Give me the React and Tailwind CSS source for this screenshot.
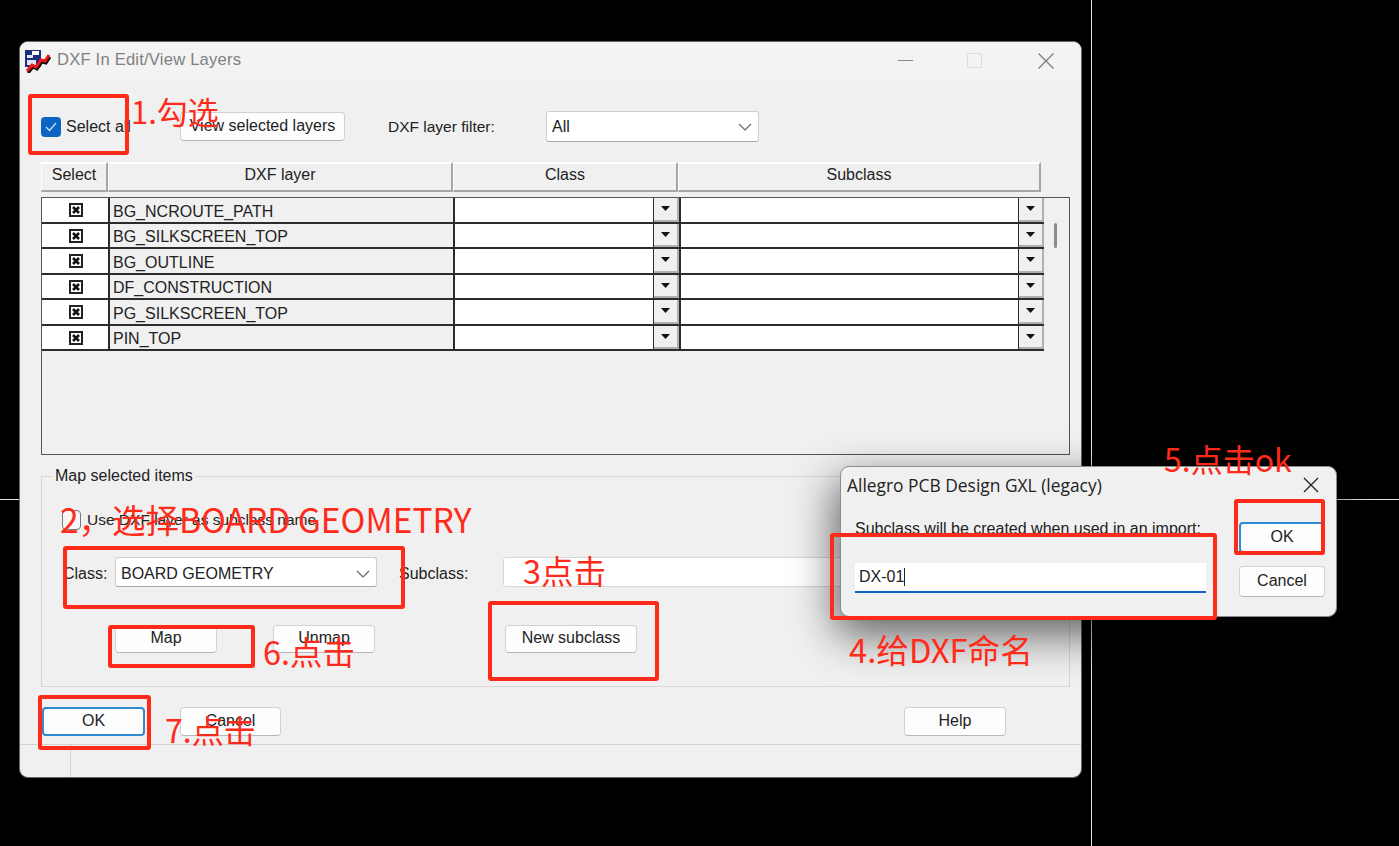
import React from "react";

const uiFont = "font-['Liberation_Sans',sans-serif]";
const layers = [
  "BG_NCROUTE_PATH",
  "BG_SILKSCREEN_TOP",
  "BG_OUTLINE",
  "DF_CONSTRUCTION",
  "PG_SILKSCREEN_TOP",
  "PIN_TOP",
];

const Chevron = () => (
  <svg width="14" height="8" viewBox="0 0 14 8" fill="none" stroke="#666" strokeWidth="1.2">
    <path d="M1 1l6 6 6-6" />
  </svg>
);

const Button = ({ className = "", children }) => (
  <button className={`flex items-center justify-center pb-[2px] rounded-[4px] bg-[#fdfdfd] border border-[#d2d2d2] border-b-[#b8b8b8] text-[#222] text-[16px] ${className}`}>
    {children}
  </button>
);

const DefaultButton = ({ className = "", children }) => (
  <button className={`flex items-center justify-center pb-[2px] rounded-[4px] bg-[#fdfdfd] border-2 border-[#2f8bd0] text-[#222] text-[16px] ${className}`}>
    {children}
  </button>
);

const Select = ({ className = "", children }) => (
  <div className={`flex items-center justify-between pl-[5px] pr-[6px] rounded-[3px] bg-white border border-[#cfcfcf] border-b-[#a8a8a8] text-[#222] text-[16px] ${className}`}>
    <span>{children}</span>
    <Chevron />
  </div>
);

const AppIcon = () => (
  <svg width="27" height="24" viewBox="0 0 27 24" className="shrink-0">
    <rect x="1" y="1" width="16" height="17" fill="#1c2f7a" />
    <rect x="3" y="6" width="6" height="3" fill="#dfe6f5" />
    <rect x="8" y="2" width="7" height="4" fill="#fff" />
    <rect x="3" y="11" width="9" height="5" fill="#dfe6f5" />
    <path d="M3 23l5-6 4 2 5-7 4 1 4-6" stroke="#111" strokeWidth="3" fill="none" transform="translate(1 1)" />
    <path d="M3 22l5-6 4 2 5-7 4 1 4-6" stroke="#f0141c" strokeWidth="3" fill="none" />
  </svg>
);

const HeaderCell = ({ className = "", children }) => (
  <div className={`h-full flex items-center justify-center pb-[5px] bg-[#f0f0f0] border-t-2 border-t-white border-l border-l-white border-r-2 border-r-[#a5a5a5] border-b-2 border-b-[#a5a5a5] text-[#222] text-[16px] ${className}`}>
    {children}
  </div>
);

const DropButton = ({ className = "" }) => (
  <div className={`w-[25px] shrink-0 flex items-center justify-center bg-[#f0f0f0] border-r-2 border-r-[#b0b0b0] border-b-2 border-b-[#b0b0b0] ${className}`}>
    <svg width="9" height="5" viewBox="0 0 9 5">
      <path d="M0 0h9L4.500 5z" fill="#111" />
    </svg>
  </div>
);

const CheckMark = () => (
  <svg width="14" height="14" viewBox="0 0 14 14">
    <rect x="1" y="1" width="12" height="12" fill="#fff" stroke="#222" strokeWidth="2" />
    <path d="M4 4l6 6M10 4l-6 6" stroke="#111" strokeWidth="2.600" />
  </svg>
);

const LayerRow = ({ name }) => (
  <div className="h-[25.5px] flex border-b-2 border-b-[#2c2c2c] text-[#222] text-[16px]">
    <div className="w-[68px] shrink-0 flex items-center justify-center pl-[2px] pt-[1px] bg-white border-r-2 border-r-[#2c2c2c]">
      <CheckMark />
    </div>
    <div className="w-[345px] shrink-0 flex items-center pl-[3px] pt-[4px] bg-[#f0f0f0] border-r-2 border-r-[#2c2c2c]">
      {name}
    </div>
    <div className="w-[199px] shrink-0 bg-white border-r border-r-[#2c2c2c]" />
    <DropButton />
    <div className="w-[340px] shrink-0 bg-white border-l-2 border-l-[#2c2c2c] border-r border-r-[#2c2c2c]" />
    <DropButton />
  </div>
);

const RedBox = ({ className = "" }) => (
  <div className={`absolute border-[4px] border-[#ff2a1a] rounded-[3px] ${className}`} />
);

const RedText = ({ className = "", children }) => (
  <div className={`absolute whitespace-nowrap leading-none text-[#ff2a1a] font-['Noto_Sans_CJK_SC',sans-serif] ${className}`}>
    {children}
  </div>
);

export default function App() {
  return (
    <div className={`relative w-[1399px] h-[846px] overflow-hidden bg-black ${uiFont}`}>
      {/* crosshair behind the windows */}
      <div className="absolute left-[1091px] top-0 w-px h-[846px] bg-[#e6e6e6]" />
      <div className="absolute left-0 top-[499px] w-[1399px] h-px bg-[#e6e6e6]" />

      {/* main window */}
      <div className="absolute left-[19px] top-[41px] w-[1063px] h-[737px] flex flex-col overflow-hidden rounded-[9px] border border-[#666] bg-[#f0f0f0]">
        <div className="h-[37px] shrink-0 flex items-center bg-[#f3f3f3] pl-[4px]">
          <AppIcon />
          <span className="ml-[6px] text-[16.6px] text-[#808080] tracking-[0.2px]">DXF In Edit/View Layers</span>
          <div className="ml-auto flex items-center mr-[27px]">
            <div className="w-[15px] h-px bg-[#8a8a8a]" />
            <div className="ml-[54px] w-[15px] h-[15px] rounded-[2px] border border-[#dcdcdc]" />
            <svg className="ml-[56px]" width="16" height="16" viewBox="0 0 16 16" stroke="#777" strokeWidth="1.100">
              <path d="M0.500 0.500l15 15M15.500 0.500l-15 15" />
            </svg>
          </div>
        </div>

        <div className="pl-[21px] flex flex-col">
          {/* top controls */}
          <div className="mt-[32px] h-[31px] flex items-center">
            <div className="w-[139px] flex items-center text-[16px] text-[#222]">
              <div className="w-[20px] h-[20px] rounded-[4px] bg-[#0a66c2] flex items-center justify-center">
                <svg width="12" height="10" viewBox="0 0 12 10" fill="none" stroke="#cfe2f7" strokeWidth="1.200">
                  <path d="M1 5l3.500 3.500L11 1" />
                </svg>
              </div>
              <span className="ml-[5px]">Select all</span>
            </div>
            <Button className="w-[165px] h-[29px]">View selected layers</Button>
            <span className="ml-[43px] w-[158px] text-[15.500px] text-[#222]">DXF layer filter:</span>
            <Select className="w-[213px] h-[31px]">All</Select>
          </div>

          {/* table header */}
          <div className="mt-[20px] h-[30px] flex">
            <HeaderCell className="w-[67px]">Select</HeaderCell>
            <HeaderCell className="w-[345px]">DXF layer</HeaderCell>
            <HeaderCell className="w-[225px]">Class</HeaderCell>
            <HeaderCell className="w-[363px]">Subclass</HeaderCell>
          </div>

          {/* table */}
          <div className="mt-[5px] w-[1029px] h-[258px] flex border-[1.5px] border-[#555] bg-[#f0f0f0]">
            <div className="w-[1002px] shrink-0 flex flex-col">
              {layers.map((name) => (
                <LayerRow key={name} name={name} />
              ))}
            </div>
            <div className="flex-1 pt-[25px] pl-[10px]">
              <div className="w-[3px] h-[25px] rounded-full bg-[#8c8c8c]" />
            </div>
          </div>

          {/* map selected items */}
          <div className="relative mt-[21px] w-[1029px] h-[211px] border border-[#d6d6d6] flex flex-col">
            <span className="absolute left-[10px] -top-[10px] px-[3px] bg-[#f0f0f0] text-[16px] leading-[18px] text-[#222]">Map selected items</span>
            <div className="mt-[33px] ml-[20px] h-[20px] flex items-center text-[15.500px] text-[#222]">
              <div className="w-[19px] h-[20px] rounded-[4px] border border-[#777] bg-[#f6f6f6]" />
              <span className="ml-[6px]">Use DXF layer as subclass name</span>
            </div>
            <div className="mt-[27px] h-[30px] flex items-center text-[16px] text-[#222]">
              <span className="ml-[21px] w-[52px] pt-[4px]">Class:</span>
              <Select className="w-[262px] h-[30px] pt-[4px]">BOARD GEOMETRY</Select>
              <span className="ml-[22px] w-[104px] pt-[4px]">Subclass:</span>
              <div className="w-[400px] h-[30px] rounded-[3px] bg-white border border-[#d6d6d6]" />
            </div>
            <div className="mt-[38px] flex">
              <Button className="ml-[73px] w-[102px] h-[28px]">Map</Button>
              <Button className="ml-[56px] w-[102px] h-[28px]">Unmap</Button>
              <Button className="ml-[130px] w-[132px] h-[28px]">New subclass</Button>
            </div>
          </div>

          {/* bottom buttons */}
          <div className="mt-[20px] flex">
            <DefaultButton className="ml-[1px] w-[103px] h-[29px]">OK</DefaultButton>
            <Button className="ml-[35px] w-[101px] h-[29px]">Cancel</Button>
            <Button className="ml-[623px] w-[102px] h-[29px]">Help</Button>
          </div>
        </div>

        {/* status bar */}
        <div className="mt-auto h-[33px] border-t border-t-[#d2d2d2] pl-[50px]">
          <div className="w-px h-full bg-[#d2d2d2]" />
        </div>
      </div>

      {/* soft shadow of the prompt, clipped to the main window by its black surroundings */}
      <div className="absolute left-[835px] top-[480px] w-[507px] h-[155px] rounded-[12px] bg-black/60 blur-[22px]" />

      {/* prompt dialog */}
      <div className="absolute left-[840px] top-[466px] w-[497px] h-[151px] flex flex-col rounded-[9px] border border-[#8c8c8c] bg-[#f0f0f0]">
        <div className="h-[36px] flex items-center justify-between pl-[6px] pr-[17px] text-[17.400px] text-[#222] font-['Open_Sans',sans-serif]">
          <span>Allegro PCB Design GXL (legacy)</span>
          <svg width="16" height="16" viewBox="0 0 16 16" stroke="#222" strokeWidth="1.300">
            <path d="M1 1l14 14M15 1L1 15" />
          </svg>
        </div>
        <div className="flex-1 flex">
          <div className="w-[398px] pl-[14px] flex flex-col">
            <span className="mt-[17px] text-[16px] leading-[18px] text-[#222]">Subclass will be created when used in an import:</span>
            <div className="mt-[25px] w-[351px] h-[30px] flex items-center pl-[4px] bg-white border-b-2 border-b-[#0a66c2] text-[16px] text-[#222]">
              DX-01<span className="w-px h-[18px] bg-[#222]" />
            </div>
          </div>
          <div className="flex flex-col pt-[19px]">
            <DefaultButton className="w-[86px] h-[31px]">OK</DefaultButton>
            <Button className="mt-[13px] w-[86px] h-[31px]">Cancel</Button>
          </div>
        </div>
      </div>

      {/* red annotations */}
      <RedBox className="left-[28px] top-[94px] w-[101px] h-[61px]" />
      <RedBox className="left-[63px] top-[546px] w-[342px] h-[63px]" />
      <RedBox className="left-[488px] top-[601px] w-[171px] h-[80px]" />
      <RedBox className="left-[830px] top-[533px] w-[387px] h-[87px]" />
      <RedBox className="left-[1234px] top-[499px] w-[91px] h-[56px]" />
      <RedBox className="left-[108px] top-[625px] w-[147px] h-[43px]" />
      <RedBox className="left-[38px] top-[695px] w-[113px] h-[55px]" />

      <RedText className="left-[131px] top-[95px] text-[31px]">1.勾选</RedText>
      <RedText className="left-[60px] top-[502px] text-[33.500px]">2，选择BOARD GEOMETRY</RedText>
      <RedText className="left-[523px] top-[554px] text-[32.500px]">3点击</RedText>
      <RedText className="left-[849px] top-[633px] text-[32.700px]">4.给DXF命名</RedText>
      <RedText className="left-[1164px] top-[442px] text-[32px]">5.点击ok</RedText>
      <RedText className="left-[263px] top-[635px] text-[32.500px]">6.点击</RedText>
      <RedText className="left-[165px] top-[713px] text-[32px]">7.点击</RedText>
    </div>
  );
}
